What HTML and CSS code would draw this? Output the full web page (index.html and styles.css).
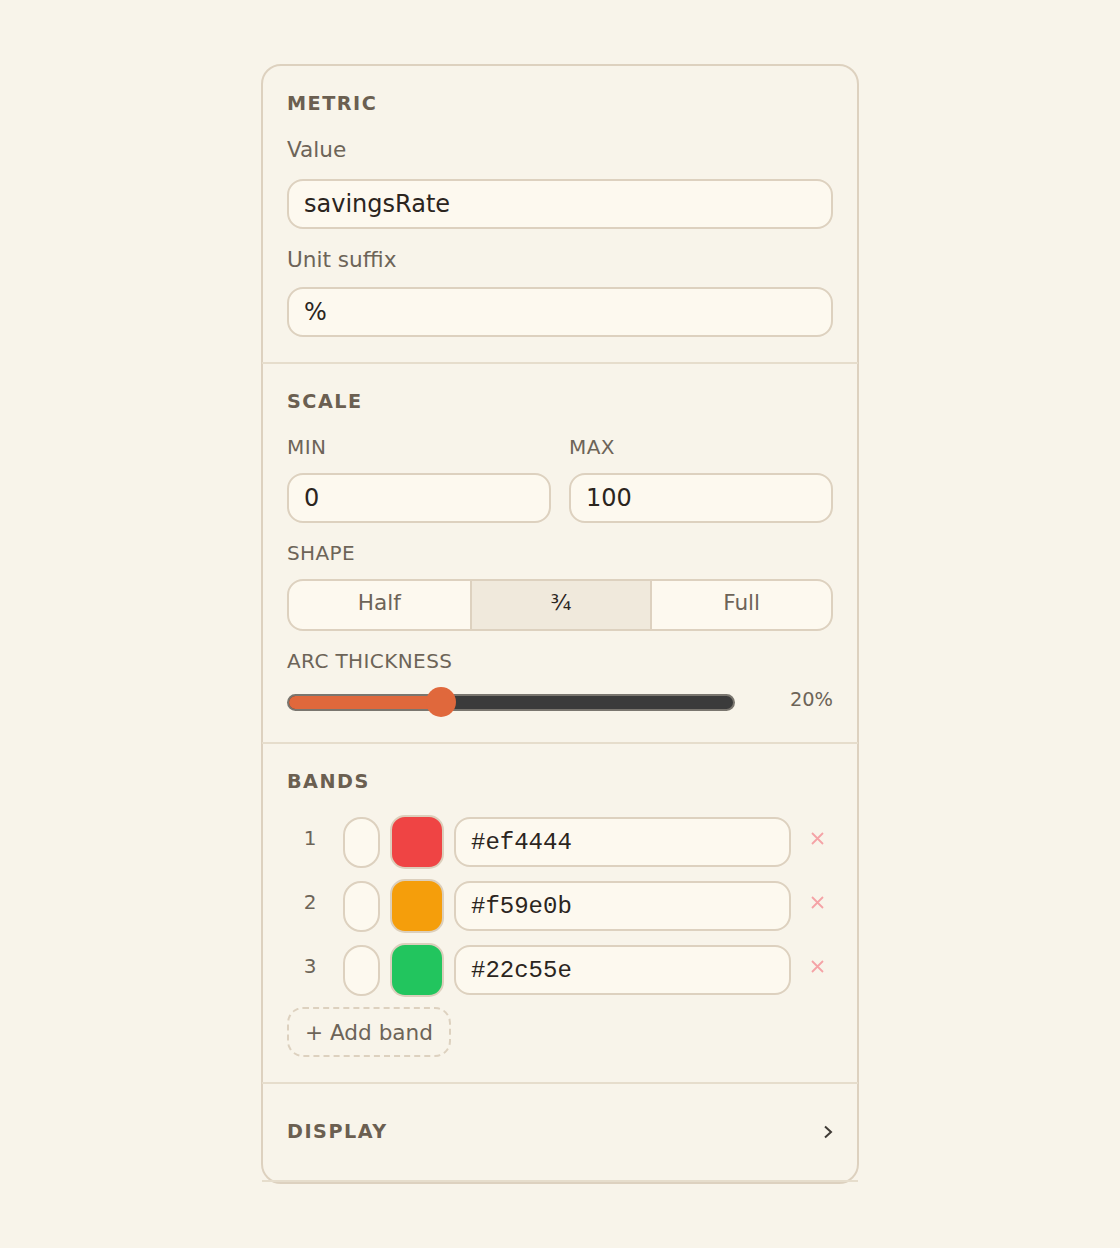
FILE: index.html
```html
<!DOCTYPE html>
<html lang="en">
<head>
<meta charset="utf-8">
<title>Gauge settings</title>
<link rel="stylesheet" href="styles.css">
</head>
<body>
<div class="panel">
  <section class="section">
    <h2 class="section-title">METRIC</h2>
    <div class="field">
      <label class="label">Value</label>
      <div class="input">savingsRate</div>
    </div>
    <div class="field">
      <label class="label">Unit suffix</label>
      <div class="input">%</div>
    </div>
  </section>

  <section class="section">
    <h2 class="section-title">SCALE</h2>
    <div class="field two-col">
      <div class="col">
        <label class="caps-label">MIN</label>
        <div class="input">0</div>
      </div>
      <div class="col">
        <label class="caps-label">MAX</label>
        <div class="input">100</div>
      </div>
    </div>
    <div class="field">
      <label class="caps-label">SHAPE</label>
      <div class="segmented">
        <div class="seg">Half</div>
        <div class="seg seg-active">¾</div>
        <div class="seg">Full</div>
      </div>
    </div>
    <div class="field">
      <label class="caps-label">ARC THICKNESS</label>
      <div class="slider-row">
        <div class="slider">
          <div class="track">
            <div class="fill" style="width: 152px"></div>
          </div>
          <div class="thumb" style="left: 139px"></div>
        </div>
        <div class="slider-value">20%</div>
      </div>
    </div>
  </section>

  <section class="section">
    <h2 class="section-title">BANDS</h2>
    <div class="bands">
      <div class="band">
        <div class="band-num">1</div>
        <div class="band-pill"></div>
        <div class="swatch" style="background:#ef4444"></div>
        <div class="input hex">#ef4444</div>
        <div class="remove"><svg width="13" height="13" viewBox="0 0 13 13"><path d="M1 1L12 12M12 1L1 12" stroke="#f5a3a6" stroke-width="1.8" fill="none"/></svg></div>
      </div>
      <div class="band">
        <div class="band-num">2</div>
        <div class="band-pill"></div>
        <div class="swatch" style="background:#f59e0b"></div>
        <div class="input hex">#f59e0b</div>
        <div class="remove"><svg width="13" height="13" viewBox="0 0 13 13"><path d="M1 1L12 12M12 1L1 12" stroke="#f5a3a6" stroke-width="1.8" fill="none"/></svg></div>
      </div>
      <div class="band">
        <div class="band-num">3</div>
        <div class="band-pill"></div>
        <div class="swatch" style="background:#22c55e"></div>
        <div class="input hex">#22c55e</div>
        <div class="remove"><svg width="13" height="13" viewBox="0 0 13 13"><path d="M1 1L12 12M12 1L1 12" stroke="#f5a3a6" stroke-width="1.8" fill="none"/></svg></div>
      </div>
      <div class="add-band">+ Add band</div>
    </div>
  </section>

  <section class="section section-collapsed">
    <h2 class="section-title">DISPLAY</h2>
    <svg class="chevron" width="10" height="14" viewBox="0 0 10 14"><path d="M2 1.5L8 7L2 12.5" stroke="#3f3a35" stroke-width="2" fill="none"/></svg>
  </section>
</div>
</body>
</html>
```

FILE: styles.css
```css
* {
  box-sizing: border-box;
}

html, body {
  margin: 0;
  background: #f8f4ea;
}

body {
  padding-top: 64px;
  font-family: "DejaVu Sans", "Noto Sans", sans-serif;
  color: #2b251e;
}

.panel {
  width: 598px;
  margin: 0 auto;
  border: 2px solid #ddd1bf;
  border-radius: 20px;
  background: #f8f4ea;
}

.section {
  padding: 27px 25px 25px;
  border-bottom: 2px solid #e6ddcc;
  margin: 0 -1px;
}

.section-title {
  margin: 0 0 22px;
  font-size: 19.2px;
  line-height: 22px;
  font-weight: bold;
  letter-spacing: 1.5px;
  color: #6b5f51;
}

.field + .field {
  margin-top: 18px;
}

.label {
  display: block;
  font-size: 21.6px;
  line-height: 26px;
  color: #6d6458;
  margin-bottom: 14px;
}

.field:first-of-type .label {
  margin-bottom: 16px;
}

.caps-label {
  display: block;
  font-size: 20px;
  line-height: 24px;
  letter-spacing: 0.4px;
  color: #6d6458;
  margin-bottom: 14px;
}

.input {
  height: 50px;
  border: 2px solid #ddd1bf;
  border-radius: 16px;
  background: #fdf9ef;
  padding: 0 15px;
  display: flex;
  align-items: center;
  font-size: 24px;
  color: #2b251e;
}

.two-col {
  display: grid;
  grid-template-columns: 1fr 1fr;
  gap: 18px;
}

.segmented {
  display: grid;
  grid-template-columns: 1fr 1fr 1fr;
  height: 52px;
  border: 2px solid #ddd1bf;
  border-radius: 16px;
  background: #fdf9ef;
  overflow: hidden;
}

.seg {
  display: flex;
  align-items: center;
  justify-content: center;
  padding-bottom: 5px;
  font-size: 21.6px;
  color: #6d6458;
}

.seg + .seg {
  border-left: 2px solid #ddd1bf;
}

.seg-active {
  background: #f0e9dc;
  color: #2b251e;
}

.slider-row {
  display: flex;
  align-items: center;
  gap: 18px;
  height: 30px;
}

.slider {
  position: relative;
  width: 448px;
  height: 30px;
  display: flex;
  align-items: center;
}

.track {
  width: 100%;
  height: 17px;
  border: 2px solid #7a766f;
  border-radius: 9px;
  background: #3b3b3b;
  overflow: hidden;
}

.fill {
  height: 100%;
  background: #e0683c;
}

.thumb {
  position: absolute;
  top: 0;
  width: 30px;
  height: 30px;
  border-radius: 50%;
  background: #e0683c;
}

.slider-value {
  flex: 1;
  text-align: right;
  font-size: 19.4px;
  color: #6d6458;
  padding-bottom: 6px;
}

.bands {
  display: flex;
  flex-direction: column;
  gap: 10px;
}

.band {
  display: flex;
  align-items: center;
  gap: 10px;
  height: 54px;
}

.band-num {
  width: 46px;
  text-align: center;
  font-size: 20px;
  color: #6d6458;
  padding-bottom: 8px;
}

.band-pill {
  width: 37px;
  height: 51px;
  border: 2px solid #ddd1bf;
  border-radius: 18px;
  background: #fdf9ef;
}

.swatch {
  width: 54px;
  height: 54px;
  border: 2px solid #dccfbc;
  border-radius: 15px;
}

.hex {
  flex: 1;
  font-family: "Liberation Mono", "DejaVu Sans Mono", monospace;
  font-size: 24px;
}

.remove {
  width: 32px;
  display: flex;
  justify-content: center;
  align-items: center;
  padding-bottom: 8px;
}

.remove svg {
  display: block;
}

.add-band {
  align-self: flex-start;
  height: 50px;
  padding: 0 16px;
  border: 2px dashed #ddd1bf;
  border-radius: 16px;
  display: flex;
  align-items: center;
  font-size: 21.6px;
  color: #6d6458;
}

.section-collapsed {
  display: flex;
  align-items: center;
  justify-content: space-between;
  padding-top: 37px;
  padding-bottom: 37px;
}

.section-collapsed .section-title {
  margin: 0;
}

.chevron {
  display: block;
}
```
